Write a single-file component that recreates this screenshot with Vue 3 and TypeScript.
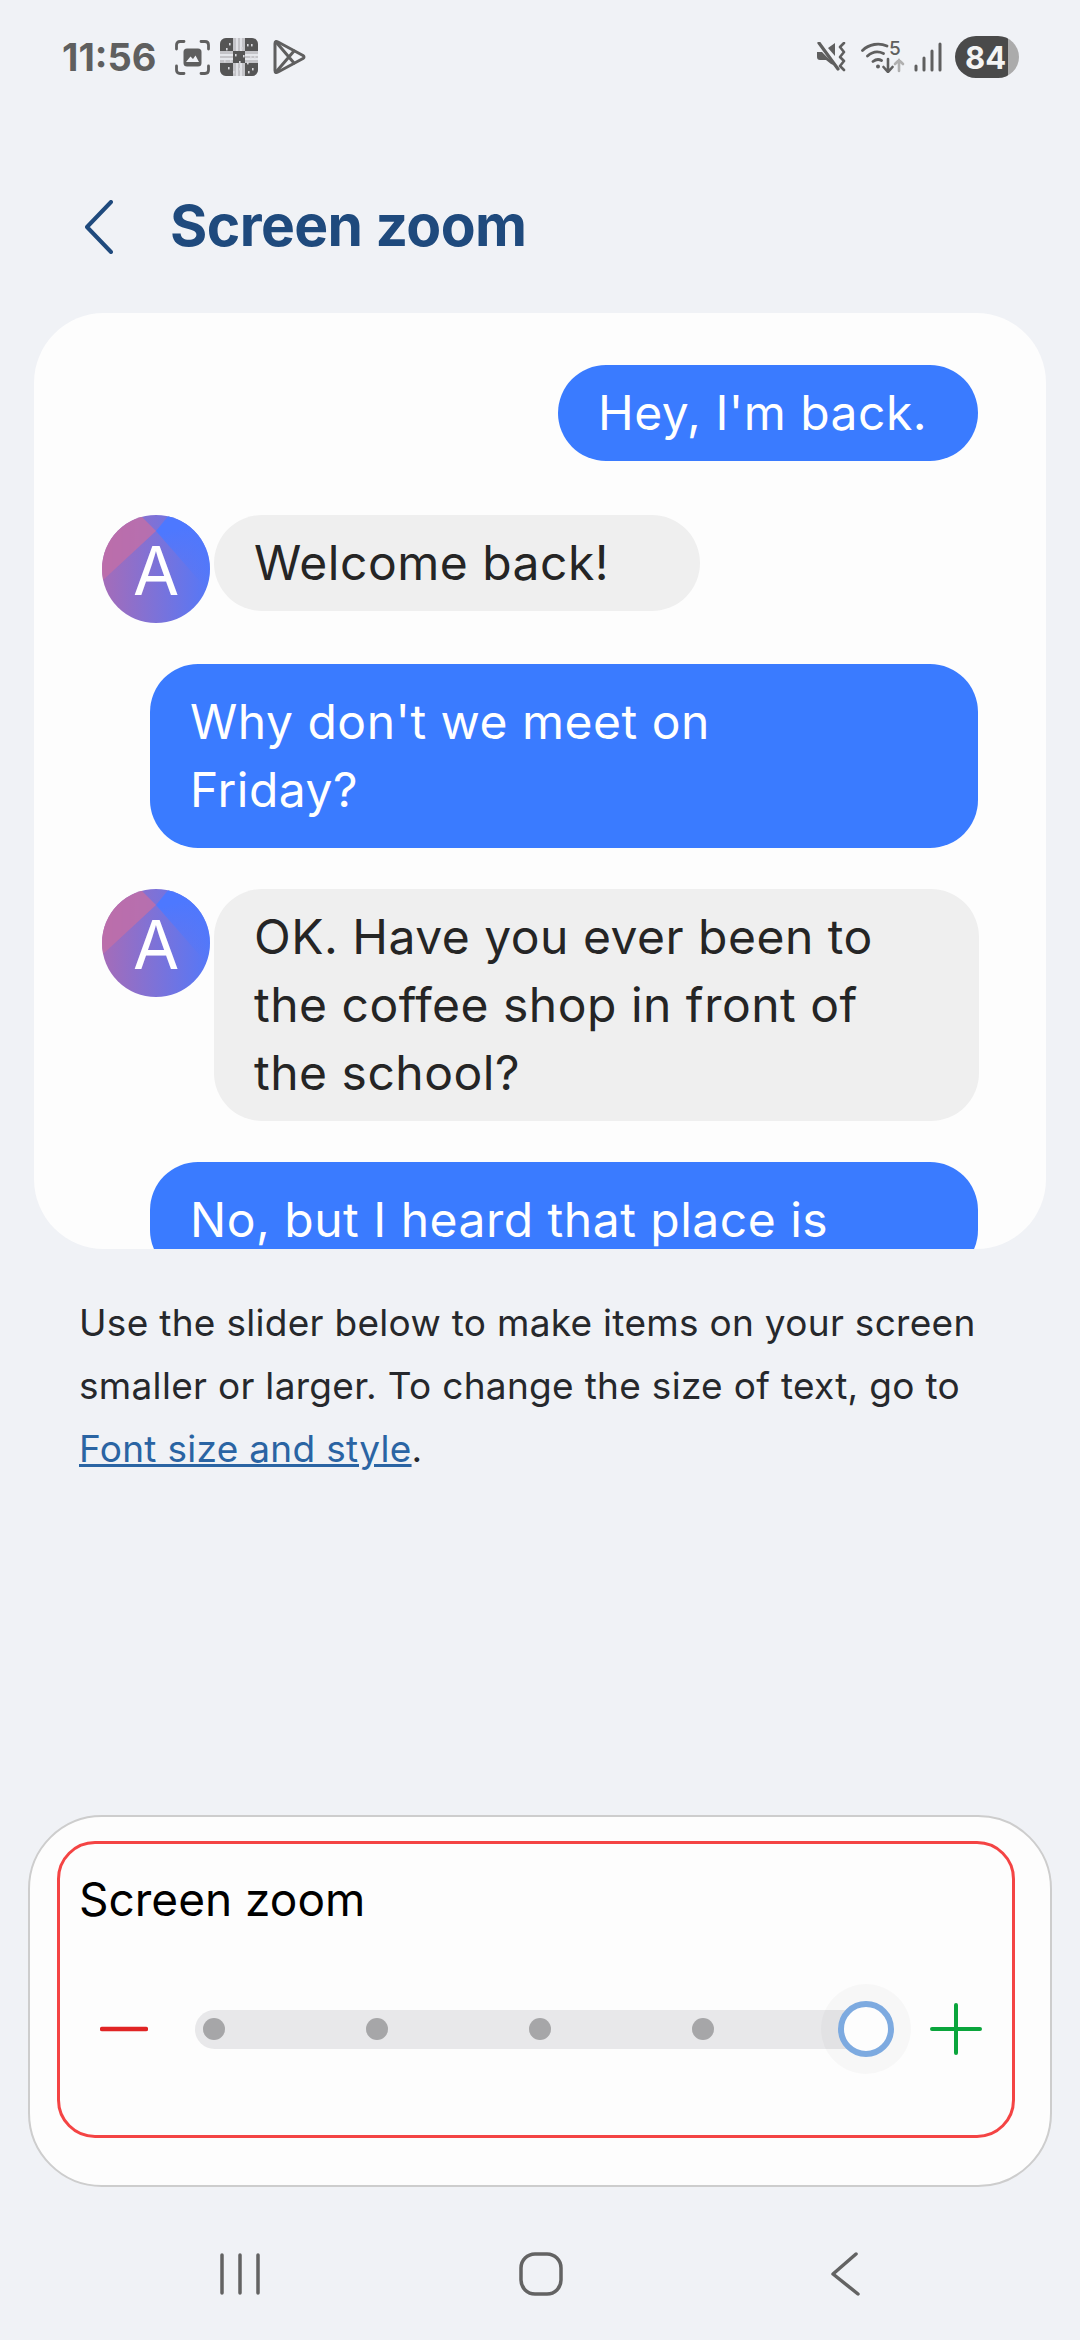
<script setup lang="ts">
interface Msg { text: string[]; side: "me" | "them"; kind: string }
const messages: Msg[] = [
  { text: ["Hey, I'm back."], side: "me", kind: "hey" },
  { text: ["Welcome back!"], side: "them", kind: "welcome" },
  { text: ["Why don't we meet on", "Friday?"], side: "me", kind: "wide tall" },
  { text: ["OK. Have you ever been to", "the coffee shop in front of", "the school?"], side: "them", kind: "fill" },
  { text: ["No, but I heard that place is"], side: "me", kind: "wide tall" },
];
const dots = [0, 1, 2, 3];
// specks that stand in for the tiny digits of the puzzle icon
const specks = [[9, 5], [27, 6], [31, 6], [6, 10], [21, 9], [15, 16], [23, 17], [30, 18], [34, 18], [4, 22], [10, 22],
  [19, 23], [27, 24], [8, 29], [13, 33], [19, 30], [28, 33], [32, 30]];
</script>

<template>
  <div class="page">
    <!-- status bar -->
    <div class="status">
      <span class="time">11:56</span>
      <svg class="ic shot" width="35" height="35" viewBox="0 0 35 35" fill="none" stroke="#5f5f5f" stroke-width="2.8" stroke-linecap="round">
        <path d="M1.500 9V5q0-3.500 3.500-3.500h4M26 1.500h4q3.500 0 3.500 3.500v4M33.500 26v4q0 3.500-3.500 3.500h-4M9 33.500H5q-3.500 0-3.500-3.500v-4" />
        <rect x="8.500" y="8.500" width="18" height="18" rx="3.500" fill="#5f5f5f" stroke="none" />
        <path d="M11 22l4.500-5.500 2.500 2.500 2.500-3.500 3.500 6.500z" fill="#f0f2f6" stroke="none" />
      </svg>
      <svg class="ic grid" width="38" height="38" viewBox="0 0 38 38">
        <rect x="0" y="0" width="38" height="38" rx="6" fill="#c4c4c8" />
        <path d="M0 6a6 6 0 0 1 6-6h7v13H0zM25 0h7a6 6 0 0 1 6 6v7H25zM13 13h12v12H13zM0 25h13v13H6a6 6 0 0 1-6-6zM25 25h13v7a6 6 0 0 1-6 6h-7z" fill="#555" />
        <path d="M17 0v13M21 0v13M17 25v13M21 25v13M0 17h13M0 21h13M25 17h13M25 21h13" stroke="#f0f2f6" stroke-width="1.300" />
        <rect v-for="(s, i) in specks" :key="i" :x="s[0]" :y="s[1]" width="1.600" height="2.400" fill="#d8d8dc" />
      </svg>
      <svg class="ic play" width="33" height="36" viewBox="0 0 33 36" fill="none" stroke="#5f5f5f" stroke-width="3" stroke-linejoin="round" stroke-linecap="round">
        <path d="M2 4.500Q2 1.500 5 3L30 16.500Q32 18 30 19.500L5 33Q2 34.500 2 31.500z" />
        <path d="M3 3L21 24M3 33L21 12" />
      </svg>
      <div class="status-right">
        <svg class="ic" width="30" height="30" viewBox="0 0 30 30" fill="none">
          <path d="M0 10h5l5 5 9 9-5-2-5-4H3q-3 0-3-3z M11 6l7-5v13z" fill="#5f5f5f" />
          <path d="M2 1l19 26" stroke="#5f5f5f" stroke-width="3.200" stroke-linecap="round" />
          <path d="M27 1l-4 4 4 5-4 5 4 4-4 5 4 4" stroke="#5f5f5f" stroke-width="2.600" stroke-linecap="round" stroke-linejoin="round" />
        </svg>
        <svg class="ic wifi" width="44" height="32" viewBox="0 0 44 32" fill="none" stroke-linecap="round">
          <path d="M1.500 9.500C8 3 18 1.500 26 5M6.500 15c5-4.500 11-5 16-2.500M12 20.500c2.500-2 6-2.500 8.500-1" stroke="#5f5f5f" stroke-width="2.800" />
          <circle cx="17" cy="25.500" r="2" fill="#5f5f5f" />
          <text x="28" y="14" class="wifi-five">5</text>
          <path d="M27 18v13M22.500 26l4.500 5 4.500-5" stroke="#5f5f5f" stroke-width="2.600" />
          <path d="M38 30V19M34 23l4-4 4 4" stroke="#b0b0b0" stroke-width="2.600" />
        </svg>
        <svg class="ic signal" width="28" height="30" viewBox="0 0 28 30" fill="none" stroke="#5f5f5f" stroke-width="3" stroke-linecap="round">
          <path d="M2 24v4M10 16v12M18 9v19M26 2v26" />
        </svg>
        <div class="battery"><span class="level">84</span></div>
      </div>
    </div>

    <!-- app bar -->
    <div class="appbar">
      <svg class="back" width="28" height="54" viewBox="0 0 28 54" fill="none" stroke="#1f4a7d" stroke-width="4" stroke-linecap="round" stroke-linejoin="round">
        <path d="M26 2L2 27l24 25" />
      </svg>
      <h1 class="title">Screen zoom</h1>
    </div>

    <!-- chat preview -->
    <div class="card">
      <div v-for="(m, i) in messages" :key="i" class="row" :class="m.side">
        <svg v-if="m.side === 'them'" class="avatar" width="108" height="108" viewBox="0 0 108 108">
          <defs>
            <linearGradient id="av" x1="0" y1="0" x2="1" y2="0">
              <stop offset="0" stop-color="#a56cb8" />
              <stop offset="1" stop-color="#5478f8" />
            </linearGradient>
            <linearGradient id="avb" x1="0.2" y1="0" x2="0.4" y2="1">
              <stop offset="0.2" stop-color="#4d78ff" />
              <stop offset="1" stop-color="#4d78ff" stop-opacity="0.1" />
            </linearGradient>
            <clipPath id="avc"><circle cx="54" cy="54" r="54" /></clipPath>
          </defs>
          <g clip-path="url(#avc)">
            <rect width="108" height="108" fill="url(#av)" />
            <path d="M0 66L54 16 38 0H0z" fill="#c06fa8" opacity=".85" />
            <path d="M67 0L54 16l54 62V0z" fill="url(#avb)" />
          </g>
          <text x="54" y="80" text-anchor="middle" class="avatar-a">A</text>
        </svg>
        <div class="bubble" :class="[m.side, m.kind]">
          <div v-for="(l, j) in m.text" :key="j">{{ l }}</div>
        </div>
      </div>
    </div>

    <p class="desc">
      Use the slider below to make items on your screen<br />
      smaller or larger. To change the size of text, go to<br />
      <a class="link">Font size and style</a>.
    </p>

    <!-- slider panel -->
    <div class="panel">
      <div class="outline">
        <div class="panel-title">Screen zoom</div>
        <div class="slider">
          <svg width="48" height="6" viewBox="0 0 48 6"><path d="M2 3h44" stroke="#e02424" stroke-width="4.500" stroke-linecap="round" /></svg>
          <div class="track">
            <span v-for="d in dots" :key="d" class="dot"></span>
            <span class="thumb-slot"></span>
            <span class="halo"></span>
            <span class="thumb"></span>
          </div>
          <svg width="52" height="52" viewBox="0 0 52 52"><path d="M2 26h48M26 2v48" stroke="#0aa53c" stroke-width="4" stroke-linecap="round" /></svg>
        </div>
      </div>
    </div>

    <!-- navigation -->
    <div class="nav">
      <svg class="recents" width="44" height="44" viewBox="0 0 44 44" fill="none" stroke="#636363" stroke-width="3.500" stroke-linecap="round">
        <path d="M4 3v38M22 3v38M40 3v38" />
      </svg>
      <svg class="home" width="44" height="44" viewBox="0 0 44 44" fill="none" stroke="#636363" stroke-width="3.500">
        <rect x="2" y="2" width="40" height="40" rx="14" />
      </svg>
      <svg class="navback" width="30" height="44" viewBox="0 0 30 44" fill="none" stroke="#636363" stroke-width="3.500" stroke-linecap="round" stroke-linejoin="round">
        <path d="M26 2L3 22l25 20" />
      </svg>
    </div>
  </div>
</template>

<style scoped>
.page { width: 1080px; height: 2340px; background: #f0f2f6; display: flex; flex-direction: column; overflow: hidden;
  font-family: Inter, "Open Sans", sans-serif; color: #222; }

.status { height: 114px; box-sizing: border-box; padding: 0 61px 0 62px; display: flex; align-items: center; flex: none; }
.time { font-weight: 700; font-size: 38px; color: #5f5f5f; width: 113px; white-space: nowrap; }
.grid { margin-left: 10px; }
.play { margin-left: 15px; }
.status-right { margin-left: auto; display: flex; align-items: center; gap: 14px; }
.signal { margin-left: -5px; }
.wifi-five { font: 500 19px Inter, sans-serif; fill: #5f5f5f; }
.battery { width: 64px; height: 42px; border-radius: 21px; margin-left: -1px;
  background: linear-gradient(90deg, #4a4a4a 0 53px, #ababab 53px); display: flex; align-items: center; }
.level { font: 700 31px Inter, sans-serif; color: #f4f4f4; margin-left: 10px; }

.appbar { height: 199px; box-sizing: border-box; flex: none; padding: 86px 0 0 85px; display: flex; align-items: flex-start; gap: 57px; }
.title { margin: -4px 0 0; font-weight: 700; font-size: 57px; line-height: 60px; color: #1f4a7d; letter-spacing: -0.6px; }

.card { height: 936px; margin: 0 34px; box-sizing: border-box; padding: 52px 68px 0; flex: none; background: #fdfdfd;
  border-radius: 70px; overflow: hidden; display: flex; flex-direction: column; gap: 41px; }
.row { display: flex; gap: 4px; flex: none; }
.row.me { justify-content: flex-end; }
.row.me:first-child { margin-bottom: 13px; }
.avatar { flex: none; display: block; }
.avatar-a { font: 400 67px Inter, sans-serif; fill: #fff; }
.bubble { box-sizing: border-box; padding: 14px 40px; font-size: 48px; letter-spacing: 0.5px; line-height: 68px; border-radius: 48px; flex: none; }
.bubble.me { background: #3a7bff; color: #fff; }
.bubble.them { background: #efefef; color: #252525; align-self: flex-start; }
.bubble.hey { width: 420px; }
.bubble.welcome { width: 486px; }
.bubble.fill { width: 765px; }
.bubble.wide { width: 828px; }
.bubble.tall { padding-top: 24px; padding-bottom: 24px; }

.desc { margin: 42px 0 0; padding: 0 79px; font-size: 37px; letter-spacing: 0.3px; line-height: 63px; color: #26282c; flex: none; }
.link { color: #2a64a3; text-decoration: underline; }

.panel { margin: auto 28px 0; height: 372px; box-sizing: border-box; background: #fdfdfd; border: 2px solid #cdcdcd; border-radius: 74px;
  padding: 24px 38px 47px 27px; flex: none; display: flex; }
.outline { flex: 1; border: 3px solid #f44444; border-radius: 38px; box-sizing: border-box; padding: 24px 30px 0 19px; }
.panel-title { font-size: 46px; line-height: 62px; color: #000; }
.slider { margin-top: 54px; height: 90px; display: flex; align-items: center; padding-left: 21px; }
.track { position: relative; width: 690px; height: 39px; margin: 0 45px 0 47px; padding: 0 8px; box-sizing: border-box; flex: none; background: #e8e8ea; border-radius: 20px;
  display: flex; align-items: center; justify-content: space-between; }
.dot { width: 22px; height: 22px; border-radius: 50%; background: #a6a6a8; }
.thumb-slot { width: 22px; height: 22px; }
.halo { position: absolute; right: -26px; top: -26px; width: 90px; height: 90px; border-radius: 50%; background: rgba(0, 0, 0, 0.025); }
.thumb { position: absolute; right: -9px; top: -9px; width: 56px; height: 56px; box-sizing: border-box; border-radius: 50%; border: 6px solid #7daae0; background: #fdfdfd; }

.nav { height: 153px; box-sizing: border-box; padding: 65px 0 0 218px; display: flex; align-items: flex-start; flex: none; }
.home { margin-left: 257px; }
.navback { margin-left: 267px; }
</style>
